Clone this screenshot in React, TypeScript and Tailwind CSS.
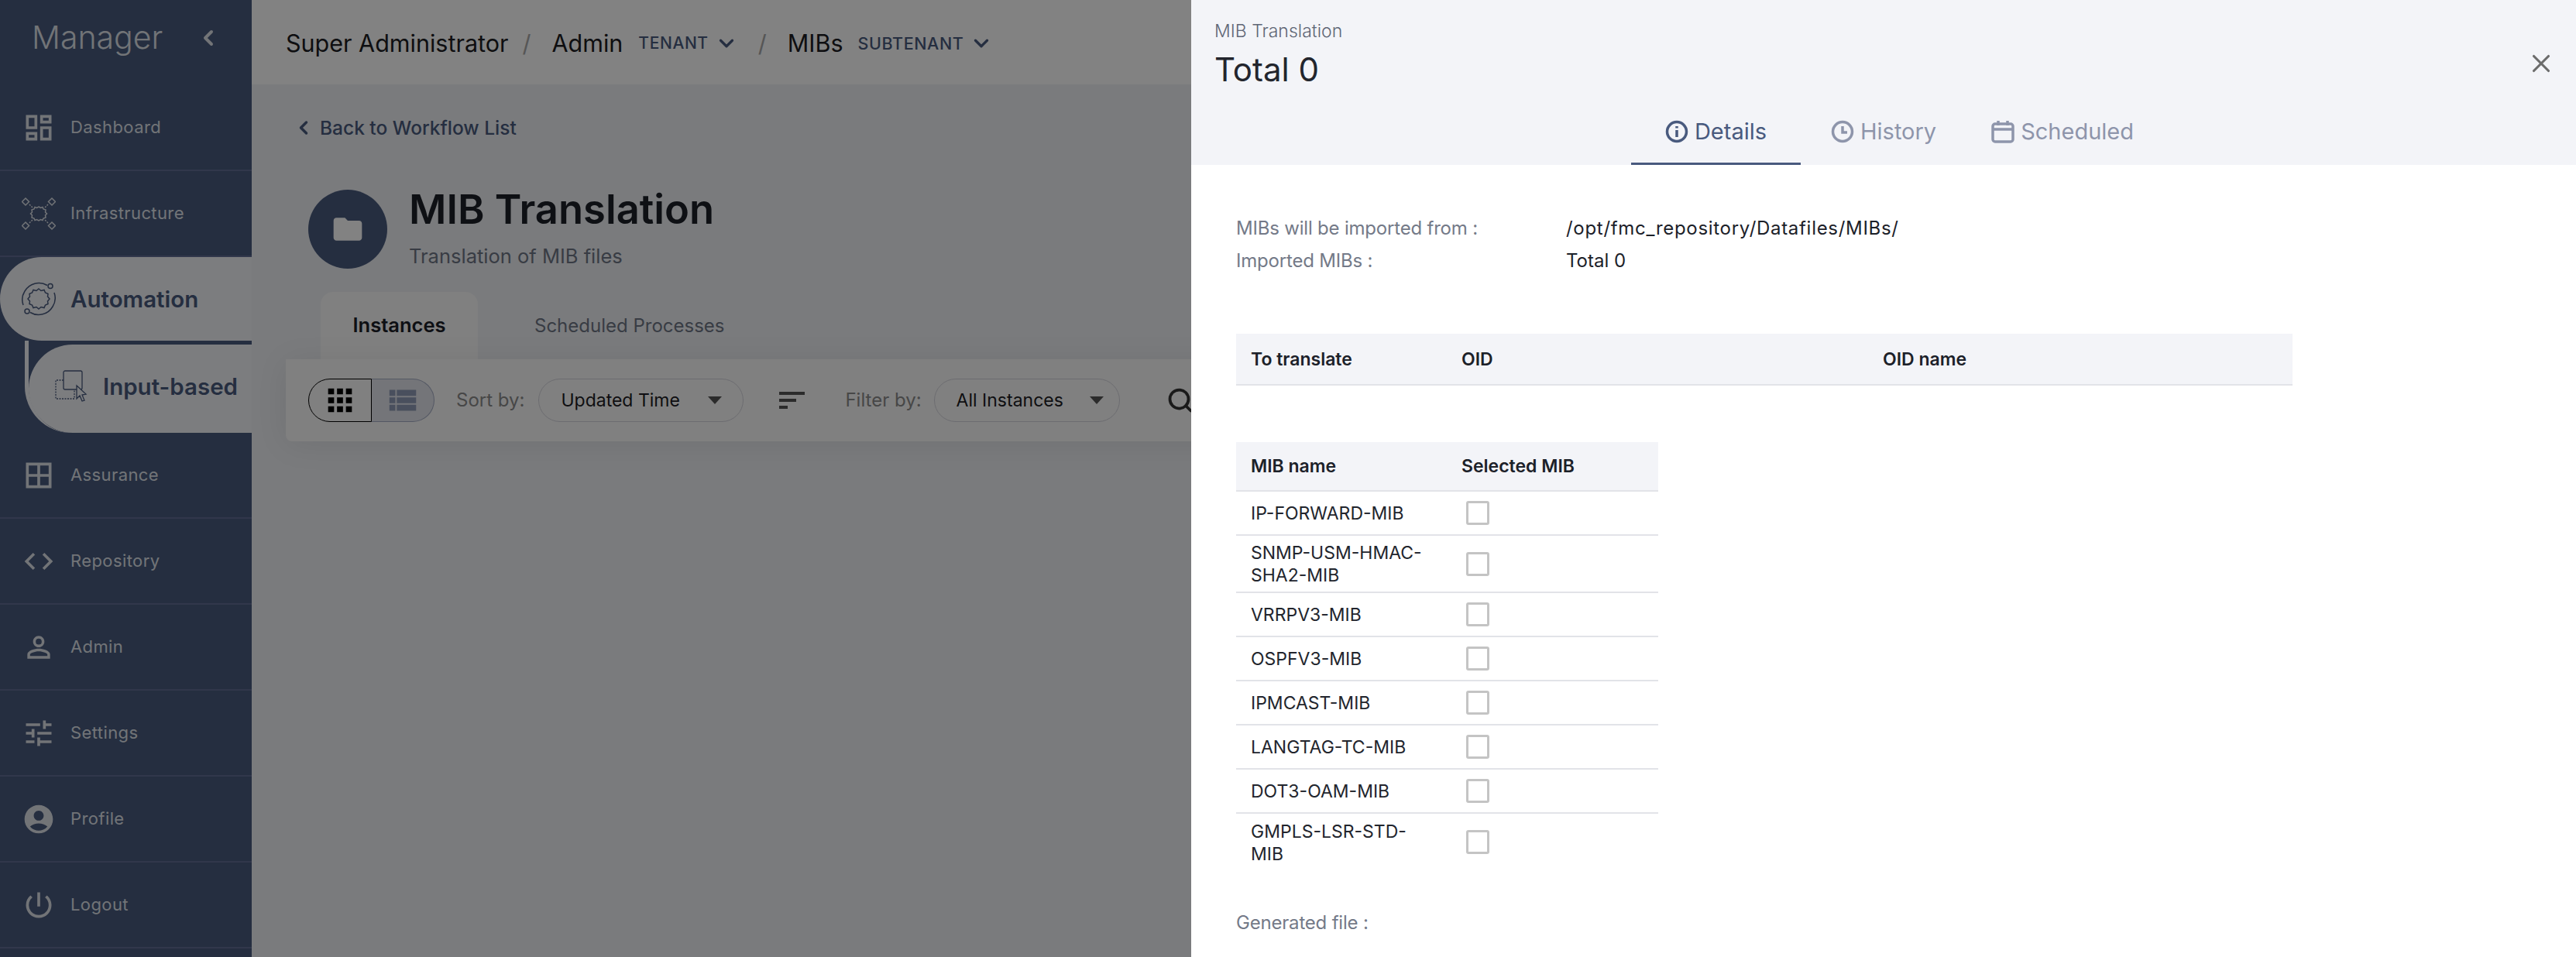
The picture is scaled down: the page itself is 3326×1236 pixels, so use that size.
import { ChevronDown, ChevronLeft, Search, X } from 'lucide-react';
import type { ReactNode } from 'react';
import {
  MdAccountCircle,
  MdApps,
  MdBorderAll,
  MdCode,
  MdFolder,
  MdOutlineDashboard,
  MdPersonOutline,
  MdPowerSettingsNew,
  MdTune,
  MdViewList,
} from 'react-icons/md';

const mibs = [
  { name: 'IP-FORWARD-MIB', tall: false },
  { name: 'SNMP-USM-HMAC-SHA2-MIB', tall: true },
  { name: 'VRRPV3-MIB', tall: false },
  { name: 'OSPFV3-MIB', tall: false },
  { name: 'IPMCAST-MIB', tall: false },
  { name: 'LANGTAG-TC-MIB', tall: false },
  { name: 'DOT3-OAM-MIB', tall: false },
  { name: 'GMPLS-LSR-STD-MIB', tall: true },
];

function InfrastructureIcon() {
  return (
    <svg width="44" height="44" viewBox="0 0 44 44" fill="none" stroke="currentColor" strokeWidth="1.500">
      <path d="M22 13l2.500 1.500 2.500-1 1 2.500 3 1-.5 3 2 2-2 2 .5 3-3 1-1 2.500-2.500-1L22 31l-2.500-1.500-2.500 1-1-2.500-3-1 .5-3-2-2 2-2-.5-3 3-1 1-2.500 2.500 1z" />
      <path d="M5 2l4.500 4.500L5 11 .5 6.500zM39 2l4.500 4.500L39 11l-4.500-4.500zM5 33l4.500 4.500L5 42 .5 37.500zM39 33l4.500 4.500L39 42l-4.500-4.500z" />
      <path d="M10 10l5 5M34 10l-5 5M10 34l5-5M34 34l-5-5" strokeDasharray="2 1.500" />
    </svg>
  );
}

function AutomationIcon() {
  return (
    <svg width="44" height="44" viewBox="0 0 44 44" fill="none" stroke="currentColor" strokeWidth="1.500">
      <path d="M22 9l3 2.500 4-1 1.500 3.500 3.500 1.500-.5 3.500 2.500 3-2.500 3 .5 3.500-3.500 1.500-1.500 3.500-4-1L22 35l-3-2.500-4 1-1.500-3.500-3.500-1.500.5-3.500L8 22l2.500-3-.5-3.500 3.500-1.500L15 10.500l4 1z" />
      <path d="M33 4.500A21 21 0 0 0 4 12 21 21 0 0 0 2 30" />
      <path d="M11 39.500A21 21 0 0 0 40 32 21 21 0 0 0 42 14" />
      <circle cx="37" cy="5.500" r="3" />
      <circle cx="7" cy="38" r="3" />
    </svg>
  );
}

function InputBasedIcon() {
  return (
    <svg width="42" height="42" viewBox="0 0 42 42" fill="none" stroke="currentColor" strokeWidth="1.300">
      <rect x="11" y="1" width="24" height="24" rx="2" />
      <path d="M11 13H1v24h24V26" strokeDasharray="2 1.500" />
      <path d="M28 20l12 11-5 1 3 7-3 1-3-7-4 4z" fill="#f4f6fa" />
    </svg>
  );
}

function NavRow({ icon, label }: { icon: ReactNode; label: string }) {
  return (
    <div className="flex h-[111px] items-center gap-[19px] border-b-2 border-[#606c93] pl-[28px] text-[22px] tracking-[0.4px] text-[#dfe3ea]">
      <span className="flex w-[44px] justify-center text-[#dfe3ea]">{icon}</span>
      <span>{label}</span>
    </div>
  );
}

function Sidebar() {
  return (
    <aside className="flex w-[325px] shrink-0 flex-col bg-[#495a7e]">
      <div className="flex h-[110px] items-center pb-[12px] pl-[41px]">
        <span className="w-[212px] text-[41px] font-light text-[#dfe3ea]">Manager</span>
        <ChevronLeft size={32} strokeWidth={3} className="text-[#dfe3ea]" />
      </div>
      <NavRow icon={<MdOutlineDashboard size={44} />} label="Dashboard" />
      <NavRow icon={<InfrastructureIcon />} label="Infrastructure" />
      <div className="flex h-[108px] items-center gap-[19px] rounded-l-[54px] bg-[#f4f6fa] pl-[28px] text-[29.500px] font-semibold text-[#495a7e]">
        <AutomationIcon />
        <span>Automation</span>
      </div>
      <div className="ml-[32px] h-[119px] rounded-bl-[60px] border-l-[5px] border-[#f4f6fa] pt-[5px]">
        <div className="flex h-[114px] items-center gap-[20px] rounded-l-[57px] bg-[#f4f6fa] pb-[6px] pl-[34px] text-[29.500px] font-semibold text-[#495a7e]">
          <InputBasedIcon />
          <span>Input-based</span>
        </div>
      </div>
      <NavRow icon={<MdBorderAll size={44} />} label="Assurance" />
      <NavRow icon={<MdCode size={44} />} label="Repository" />
      <NavRow icon={<MdPersonOutline size={44} />} label="Admin" />
      <NavRow icon={<MdTune size={44} />} label="Settings" />
      <NavRow icon={<MdAccountCircle size={44} />} label="Profile" />
      <NavRow icon={<MdPowerSettingsNew size={44} />} label="Logout" />
    </aside>
  );
}

function Breadcrumbs() {
  return (
    <header className="flex h-[109px] shrink-0 items-center bg-white pl-[44px] pt-[3px] text-[30.500px] text-[#1c1c22]">
      <span>Super Administrator</span>
      <span className="ml-[18px] text-[#a9a9a9]">/</span>
      <span className="ml-[27px]">Admin</span>
      <span className="ml-[20px] text-[21px] font-medium tracking-[0.6px] text-[#495a7e]">TENANT</span>
      <ChevronDown size={30} strokeWidth={2.600} className="ml-[8px] text-[#495a7e]" />
      <span className="ml-[26px] text-[#a9a9a9]">/</span>
      <span className="ml-[27px]">MIBs</span>
      <span className="ml-[19px] text-[21.500px] font-medium tracking-[0.6px] text-[#495a7e]">SUBTENANT</span>
      <ChevronDown size={30} strokeWidth={2.600} className="ml-[8px] text-[#495a7e]" />
    </header>
  );
}

function Toolbar() {
  return (
    <div className="mr-[44px] flex h-[106px] items-center rounded-b-[8px] rounded-tr-[8px] bg-[#fbfbfb] pl-[29px] shadow-[0_4px_40px_rgba(0,0,0,0.08)]">
      <div className="flex h-[56px] w-[163px]">
        <span className="flex w-[82px] items-center justify-center rounded-l-[28px] border-[1.500px] border-black text-black">
          <MdApps size={46} />
        </span>
        <span className="flex flex-1 items-center justify-center rounded-r-[28px] border-[1.500px] border-l-0 border-[#a5acc4] bg-[#e3e6ed] text-[#8f9cb6]">
          <MdViewList size={46} />
        </span>
      </div>
      <span className="ml-[28px] text-[24px] text-[#8b8b8b]">Sort by:</span>
      <div className="ml-[18px] flex h-[56px] w-[265px] items-center rounded-[28px] border-[1.500px] border-[#d4d4dc] pl-[28px] text-[23px] text-[#1d1d24]">
        <span className="w-[190px]">Updated Time</span>
        <span className="h-0 w-0 border-x-[9px] border-t-[10px] border-x-transparent border-t-[#555]" />
      </div>
      <div className="ml-[46px] flex w-[33px] flex-col gap-[5px]">
        <span className="h-[4px] w-[33px] bg-[#555]" />
        <span className="h-[4px] w-[22px] bg-[#555]" />
        <span className="h-[4px] w-[11px] bg-[#555]" />
      </div>
      <span className="ml-[52px] text-[24px] text-[#8b8b8b]">Filter by:</span>
      <div className="ml-[16px] flex h-[56px] w-[240px] items-center rounded-[28px] border-[1.500px] border-[#d4d4dc] pl-[28px] text-[23px] text-[#1d1d24]">
        <span className="w-[172px]">All Instances</span>
        <span className="h-0 w-0 border-x-[9px] border-t-[10px] border-x-transparent border-t-[#555]" />
      </div>
      <Search size={36} strokeWidth={2.500} className="ml-[60px] text-[#333]" />
    </div>
  );
}

function Page() {
  return (
    <main className="flex min-w-0 flex-1 flex-col bg-[#eff1f5]">
      <Breadcrumbs />
      <div className="ml-[44px] mt-[43px] flex h-[26px] items-center gap-[7px] pl-[9px] text-[24.500px] font-medium text-[#495a7e]">
        <ChevronLeft size={28} strokeWidth={3} />
        <span>Back to Workflow List</span>
      </div>
      <div className="ml-[73px] mt-[67px] flex h-[102px] gap-[28px]">
        <span className="flex h-[102px] w-[102px] items-center justify-center rounded-full bg-[#495a7e] text-white">
          <MdFolder size={44} />
        </span>
        <div>
          <div className="-mt-[4px] text-[52.500px] font-semibold leading-[58px] text-[#1c2129]">MIB Translation</div>
          <div className="mt-[15px] text-[25.500px] leading-[34px] text-[#6f7785]">Translation of MIB files</div>
        </div>
      </div>
      <div className="ml-[44px] mt-[30px] flex h-[87px] items-stretch pl-[45px]">
        <span className="flex w-[203px] items-center justify-center rounded-t-[16px] bg-[#fbfbfb] text-[25.500px] font-semibold text-[#1c2129]">
          Instances
        </span>
        <span className="ml-[73px] flex items-center text-[24px] text-[#6f7785]">Scheduled Processes</span>
      </div>
      <div className="ml-[44px]">
        <Toolbar />
      </div>
    </main>
  );
}

function Checkbox() {
  return <span className="block h-[31px] w-[30px] rounded-[3px] border-[3px] border-[#c4c4c4] bg-white" />;
}

function Drawer() {
  return (
    <section className="absolute inset-y-0 right-0 w-[1788px] overflow-hidden bg-white">
      <div className="relative h-[213px] bg-[#f3f4f8]">
        <div className="pl-[30px] pt-[24px] text-[23px] font-light leading-[32px] text-[#5f6675]">MIB Translation</div>
        <div className="pl-[30px] pt-[6px] text-[42px] leading-[56px] text-[#22252d]">Total 0</div>
        <button type="button" className="absolute right-[26px] top-[63px] text-[#6b6b6b]">
          <X size={38} strokeWidth={2} />
        </button>
        <div className="absolute bottom-0 left-[568px] flex text-[29px] leading-[44px]">
          <div className="flex h-[68px] w-[219px] items-start justify-center gap-[8px] border-b-[3px] border-[#495a7e] pt-[3px] text-[#495a7e]">
            <svg width="30" height="30" viewBox="0 0 30 30" fill="none" stroke="currentColor" strokeWidth="3.500" className="mt-[7px]">
              <circle cx="15" cy="15" r="12.500" />
              <path d="M15 13v9M15 8v2.500" />
            </svg>
            <span>Details</span>
          </div>
          <div className="ml-[39px] flex items-start gap-[8px] pt-[3px] text-[#8e95ab]">
            <svg width="30" height="30" viewBox="0 0 30 30" fill="none" stroke="currentColor" strokeWidth="3.500" className="mt-[7px]">
              <circle cx="15" cy="15" r="12.500" />
              <path d="M15 8v8h6" />
            </svg>
            <span>History</span>
          </div>
          <div className="ml-[71px] flex items-start gap-[8px] pt-[3px] text-[#8e95ab]">
            <svg width="30" height="30" viewBox="0 0 30 30" fill="none" stroke="currentColor" strokeWidth="3.500" className="mt-[7px]">
              <rect x="2" y="5" width="26" height="23" rx="3" />
              <path d="M2 12h26M9 1v6M21 1v6" />
            </svg>
            <span>Scheduled</span>
          </div>
        </div>
      </div>

      <div className="pl-[58px] text-[24px] leading-[42px]">
        <div className="mt-[61px] flex">
          <span className="w-[426px] tracking-[-0.2px] text-[#747a88]">MIBs will be imported from :</span>
          <span className="tracking-[0.7px] text-[#1c2129]">/opt/fmc_repository/Datafiles/MIBs/</span>
        </div>
        <div className="flex">
          <span className="w-[426px] tracking-[-0.2px] text-[#747a88]">Imported MIBs :</span>
          <span className="text-[#1c2129]">Total 0</span>
        </div>

        <table className="mt-[73px] w-[1364px] table-fixed border-collapse text-left">
          <thead>
            <tr className="h-[66px] border-b-2 border-[#e2e3e8] bg-[#f3f4f8] text-[23px] text-[#1c2129]">
              <th className="w-[272px] pl-[19px] font-semibold">To translate</th>
              <th className="w-[544px] pl-[19px] font-semibold">OID</th>
              <th className="pl-[19px] font-semibold">OID name</th>
            </tr>
          </thead>
        </table>

        <table className="mt-[73px] w-[545px] table-fixed border-collapse text-left">
          <thead>
            <tr className="h-[63px] border-b-2 border-[#e2e3e8] bg-[#f3f4f8] text-[23px] text-[#1c2129]">
              <th className="w-[272px] pl-[19px] font-semibold">MIB name</th>
              <th className="pl-[19px] font-semibold">Selected MIB</th>
            </tr>
          </thead>
          <tbody className="text-[23px] leading-[29px] text-[#22252d]">
            {mibs.map((mib) => (
              <tr key={mib.name} className="border-b-2 border-[#e2e3e8] last:border-b-0">
                <td className={mib.tall ? 'h-[74px] pl-[19px] pr-[19px] pt-[2px]' : 'h-[57px] pl-[19px] pr-[19px] pt-[2px]'}>{mib.name}</td>
                <td className="pl-[25px]">
                  <Checkbox />
                </td>
              </tr>
            ))}
          </tbody>
        </table>

        <div className="mt-[47px] tracking-[-0.2px] text-[#747a88]">Generated file :</div>
      </div>
    </section>
  );
}

export default function App() {
  return (
    <div className="relative flex h-[1236px] w-[3326px] overflow-hidden font-['Inter',sans-serif]">
      <Sidebar />
      <Page />
      <div className="absolute inset-0 bg-black/[0.49]" />
      <Drawer />
    </div>
  );
}
